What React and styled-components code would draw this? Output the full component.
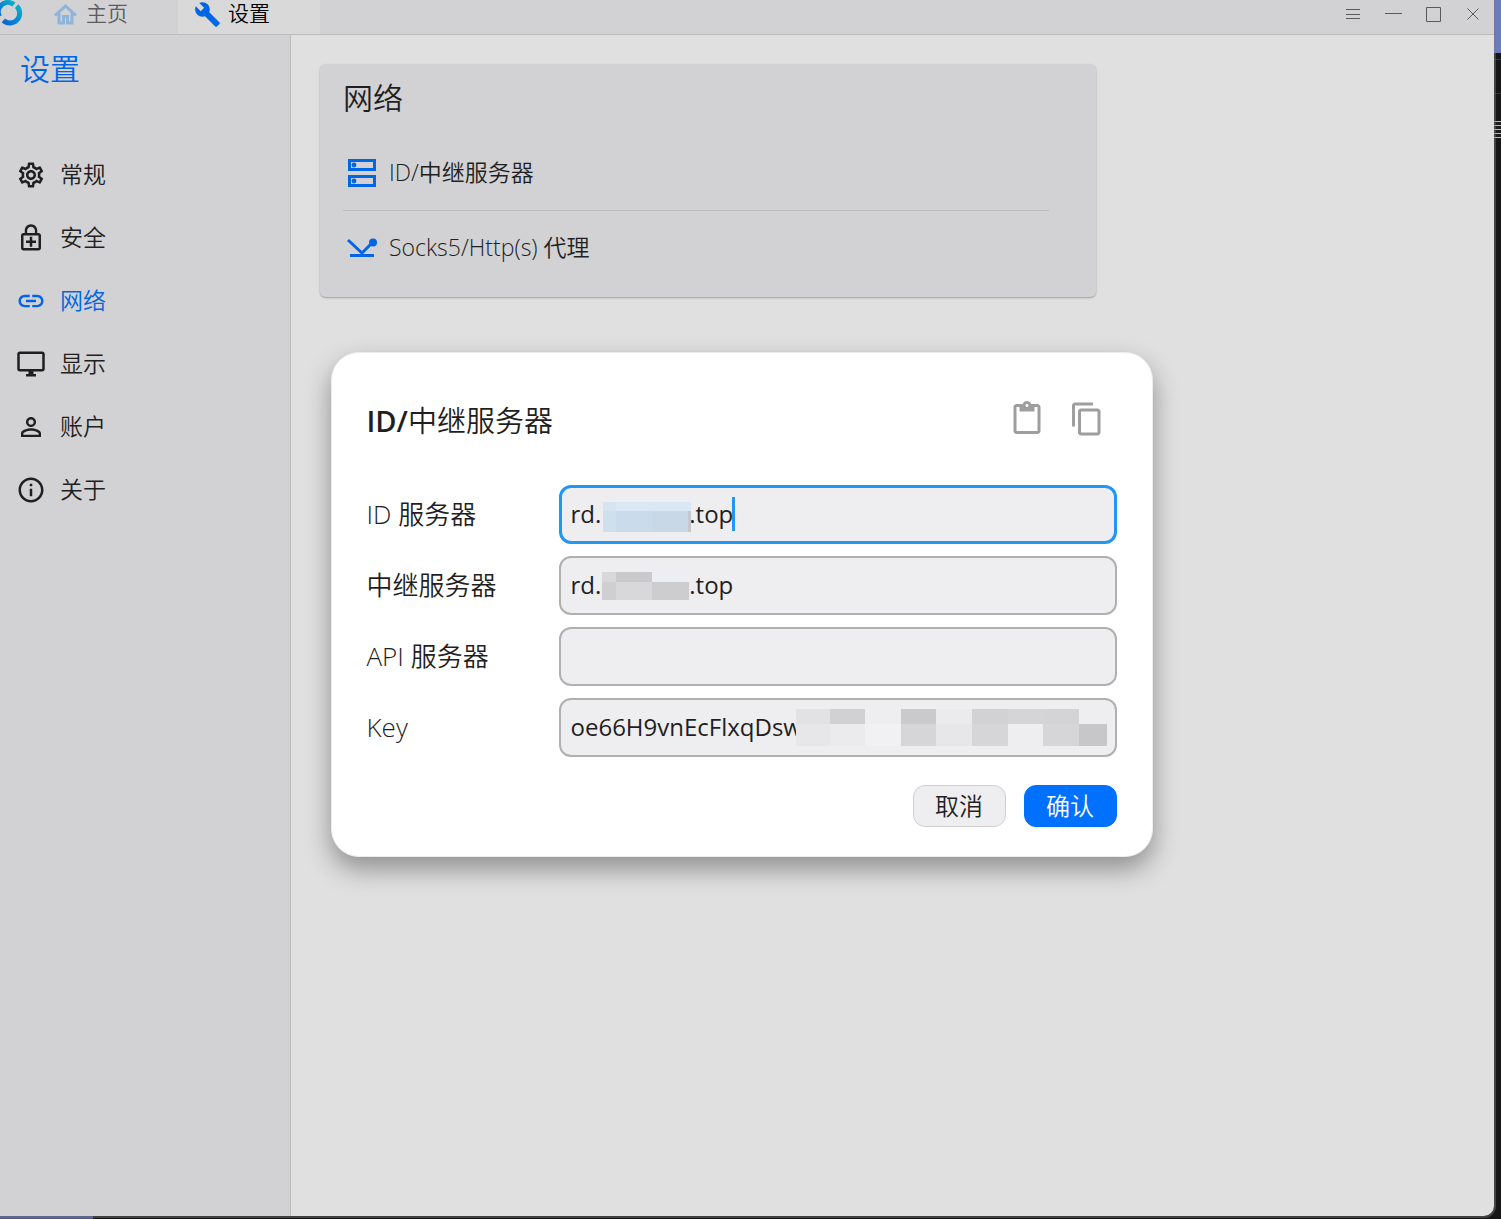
import React from "react";
import styled, { createGlobalStyle } from "styled-components";
import {
  MdBuild,
  MdOutlineSettings,
  MdOutlineEnhancedEncryption,
  MdLink,
  MdOutlineDesktopWindows,
  MdPersonOutline,
  MdInfoOutline,
  MdContentPaste,
  MdContentCopy,
} from "react-icons/md";

const c = {
  text: "#1f1f1f",
  accent: "#0066e6",
  panel: "#d2d2d4",
  body: "#e0e0e0",
  line: "#bcbcbe",
  field: "#eeeef0",
};

const GlobalStyle = createGlobalStyle`
  * { box-sizing: border-box; }
  body {
    margin: 0;
    font-family: "Open Sans", "Noto Sans CJK SC", sans-serif;
    font-weight: 350;
    color: ${c.text};
  }
  button, input { font: inherit; color: inherit; }
  h1, h2, p { margin: 0; font-weight: inherit; }
  svg { display: block; flex: none; }
`;

const Desktop = styled.div`
  min-height: 100vh;
  display: grid;
  grid-template-columns: minmax(0, 1fr) 5px;
  grid-template-rows: minmax(0, 1fr) 1px;
  background:
    linear-gradient(#6c7cba, #6c7cba) right top / 7px 53px no-repeat,
    linear-gradient(#383838, #383838) right 59px / 7px 1px no-repeat,
    linear-gradient(#383838, #383838) right 93px / 7px 1px no-repeat,
    repeating-linear-gradient(#b8b8b8 0 1px, #1c1c1c 1px 4px) right 121px / 7px 18px no-repeat,
    linear-gradient(#4f5a90, #4f5a90) left bottom / 93px 3px no-repeat,
    #161616;
`;

const Window = styled.div`
  position: relative;
  display: flex;
  flex-direction: column;
  overflow: hidden;
  border: solid rgba(120, 120, 120, 0.45);
  border-width: 0 2px 2px 0;
  border-radius: 0 0 12px 0;
`;

const TitleBar = styled.header`
  display: flex;
  height: 35px;
  background: ${c.panel};
  border-bottom: 1px solid ${c.line};
`;

const Logo = styled.div`
  width: 36px;
  height: 26px;
`;

const Name = styled.span`
  padding-bottom: 4px;
`;

const Tab = styled.button`
  display: flex;
  align-items: center;
  gap: 7px;
  width: 142px;
  height: 34px;
  padding: 0 16px 6px;
  border: 0;
  font-size: 21px;
  background: ${(p) => (p.$active ? "#d9d9da" : "transparent")};
  color: ${(p) => (p.$active ? "#000" : "#5c5c5c")};
  svg { color: ${(p) => (p.$active ? c.accent : "#8fb4dc")}; }
`;

const Controls = styled.div`
  display: flex;
  margin-left: auto;
  padding-right: 1px;
`;

const ControlButton = styled.button`
  display: grid;
  place-items: center;
  width: 40px;
  height: 28px;
  padding: 0;
  border: 0;
  background: none;
  svg { stroke: #5a5a5a; fill: none; }
`;

const Body = styled.div`
  display: flex;
  flex: 1;
`;

const Sidebar = styled.nav`
  width: 291px;
  background: ${c.panel};
  border-right: 1px solid ${c.line};
`;

const SidebarTitle = styled.h1`
  padding: 12px 20px 0;
  height: 108px;
  font-size: 30px;
  line-height: 44px;
  color: ${c.accent};
`;

const NavItem = styled.a`
  display: flex;
  align-items: center;
  gap: 14px;
  height: 63px;
  padding-left: 16px;
  font-size: 23px;
  text-decoration: none;
  color: ${(p) => (p.$active ? c.accent : c.text)};
`;

const Content = styled.main`
  flex: 1;
  padding: 29px;
  background: ${c.body};
`;

const Card = styled.section`
  max-width: 776px;
  height: 233px;
  padding: 12px 47px 0 23px;
  border-radius: 6px;
  background: ${c.panel};
  box-shadow: 0 1px 2px rgba(0, 0, 0, 0.3);
`;

const CardTitle = styled.h2`
  height: 60px;
  font-size: 30px;
  line-height: 44px;
`;

const CardRow = styled.button`
  display: flex;
  align-items: center;
  gap: 10px;
  width: 100%;
  height: 74px;
  padding: 0 0 0 2px;
  border: 0;
  background: none;
  font-size: 23px;
  text-align: left;
  svg { color: ${c.accent}; }
  & + & { border-top: 1px solid ${c.line}; }
`;

const Overlay = styled.div`
  position: absolute;
  inset: 0;
  display: grid;
  place-items: center;
  padding: 0 11px 7px 0;
`;

const Dialog = styled.form`
  width: 822px;
  max-width: 100%;
  padding: 35px 35px 29px;
  border: 1px solid #ededed;
  border-radius: 28px;
  background: #fff;
  box-shadow: 0 12px 26px rgba(0, 0, 0, 0.36);
`;

const DialogHeader = styled.div`
  display: flex;
  align-items: center;
  justify-content: space-between;
  height: 66px;
  margin-bottom: 31px;
`;

const DialogTitle = styled.h2`
  font-size: 29px;
  line-height: 40px;
  span { font-weight: 600; }
`;

const Tools = styled.div`
  display: flex;
  gap: 24px;
  padding: 0 12px 4px 0;
`;

const ToolButton = styled.button`
  padding: 0;
  border: 0;
  background: none;
  color: #9e9e9e;
`;

const Fields = styled.div`
  display: grid;
  gap: 12px;
`;

const FieldRow = styled.div`
  display: grid;
  grid-template-columns: 192px minmax(0, 1fr);
  align-items: center;
`;

const Label = styled.label`
  padding-bottom: 2px;
  font-size: 26px;
  line-height: 40px;
`;

const InputWrap = styled.div`
  position: relative;
  display: flex;
`;

const Input = styled.input`
  width: 100%;
  height: 59px;
  padding: 0 ${(p) => (p.$focused ? 9 : 10)}px 2px;
  border: ${(p) => (p.$focused ? "3px solid #2196f3" : "2px solid #b0b0b0")};
  border-radius: 12px;
  outline: none;
  background: ${c.field};
  font-size: 24px;
  font-weight: 400;
`;

const Mosaic = styled.div`
  position: absolute;
  left: ${(p) => p.$left}px;
  top: ${(p) => p.$top}px;
  display: grid;
  grid-template-columns: ${(p) => p.$cols};
  grid-template-rows: ${(p) => p.$rows};
`;

const Cell = styled.span`
  background: ${(p) => p.$color};
`;

const Caret = styled.span`
  position: absolute;
  left: 173px;
  top: 12px;
  width: 3px;
  height: 34px;
  background: #2196f3;
`;

const Actions = styled.div`
  display: flex;
  justify-content: flex-end;
  gap: 18px;
  margin-top: 28px;
`;

const ActionButton = styled.button`
  width: 93px;
  height: 42px;
  padding: 0;
  border: 1px solid ${(p) => (p.$primary ? "#0071ff" : "#d0d0d2")};
  border-radius: 12px;
  background: ${(p) => (p.$primary ? "#0071ff" : c.field)};
  color: ${(p) => (p.$primary ? "#fff" : c.text)};
  font-size: 24px;
  line-height: 38px;
`;

const nav = [
  ["常规", MdOutlineSettings],
  ["安全", MdOutlineEnhancedEncryption],
  ["网络", MdLink],
  ["显示", MdOutlineDesktopWindows],
  ["账户", MdPersonOutline],
  ["关于", MdInfoOutline],
];

const fields = [
  {
    id: "id-server",
    label: "ID 服务器",
    value: "rd.\u2003\u2003\u2003\u2002\u2009.top",
    focused: true,
    mosaic: {
      left: 44, top: 17, cols: "13px 36px 36px 3px", rows: "9px 21px",
      colors: ["#d6e4f2", "#dae8f6", "#dae8f6", "#dae8f6", "#cfdfee", "#cadcec", "#c9d8e6", "#c6c8cc"],
    },
  },
  {
    id: "relay-server",
    label: "中继服务器",
    value: "rd.\u2003\u2003\u2003\u2002\u2009.top",
    mosaic: {
      left: 43, top: 16, cols: "14px 36px 37px", rows: "10px 18px",
      colors: ["#d8d8da", "#cacacc", "#eceef3", "#cfcfd1", "#d8d8da", "#cdcdcf"],
    },
  },
  { id: "api-server", label: "API 服务器", value: "" },
  {
    id: "key",
    label: "Key",
    value: "oe66H9vnEcFlxqDsw",
    mosaic: {
      left: 237, top: 11, cols: "34px 35px 36px 35px 36px 36px 35px 36px 28px", rows: "15px 22px",
      colors: [
        "#e2e2e4", "#d1d1d3", "#eeeef0", "#cacacc", "#ebebed", "#d2d2d4", "#d5d5d7", "#d4d4d6", "#eeeef0",
        "#e7e7e9", "#ebebed", "#f1f1f3", "#d6d6d8", "#e7e7e9", "#d6d6d8", "#eeeef0", "#d6d6d8", "#c7c7c9",
      ],
    },
  },
];

function LogoMark() {
  return (
    <svg width="24" height="26" viewBox="0 0 24 26" fill="none" strokeWidth="5">
      <defs>
        <linearGradient id="ring" x1="0" y1="1" x2="1" y2="0">
          <stop offset="0" stopColor="#0a62d6" />
          <stop offset="1" stopColor="#08b0cc" />
        </linearGradient>
      </defs>
      <path d="M-0.5 16.5A9.6 9.6 0 0 1 14 4.5" stroke="url(#ring)" />
      <path d="M16.6 6.2A9.6 9.6 0 0 1 3.4 20.4" stroke="url(#ring)" />
    </svg>
  );
}

function HomeIcon() {
  return (
    <svg width="27" height="27" viewBox="0 0 27 27" fill="none" stroke="currentColor" strokeWidth="3">
      <path d="M3 14.5L13.5 5L24 14.5" />
      <path d="M7 12V22H11.5V15.5H15.5V22H20V12" />
    </svg>
  );
}

function ServerIcon() {
  return (
    <svg width="34" height="28" viewBox="0 0 34 28" fill="none" stroke="currentColor" strokeWidth="3">
      <rect x="4.5" y="1.5" width="25" height="9" />
      <rect x="4.5" y="17.5" width="25" height="9" />
      <circle cx="9" cy="6" r="2.4" fill="currentColor" stroke="none" />
      <circle cx="9" cy="22" r="2.4" fill="currentColor" stroke="none" />
    </svg>
  );
}

function ProxyIcon() {
  return (
    <svg width="34" height="20" viewBox="-2 0 34 20" fill="none" stroke="currentColor" strokeWidth="3">
      <path d="M1 2L15 15L26 4" />
      <path d="M3 17.5H27" />
      <circle cx="26" cy="4.5" r="4" fill="currentColor" stroke="none" />
    </svg>
  );
}

function Field({ id, label, value, focused, mosaic }) {
  return (
    <FieldRow>
      <Label htmlFor={id}>{label}</Label>
      <InputWrap>
        <Input id={id} defaultValue={value} $focused={focused} spellCheck={false} />
        {mosaic && (
          <Mosaic $left={mosaic.left} $top={mosaic.top} $cols={mosaic.cols} $rows={mosaic.rows}>
            {mosaic.colors.map((color, i) => (
              <Cell key={i} $color={color} />
            ))}
          </Mosaic>
        )}
        {focused && <Caret />}
      </InputWrap>
    </FieldRow>
  );
}

export default function App() {
  return (
    <>
      <GlobalStyle />
      <Desktop>
        <Window>
          <TitleBar>
            <Logo><LogoMark /></Logo>
            <Tab type="button"><HomeIcon /><Name>主页</Name></Tab>
            <Tab type="button" $active><MdBuild size={27} /><Name>设置</Name></Tab>
            <Controls>
              <ControlButton type="button" aria-label="菜单">
                <svg width="16" height="12"><path d="M1 1.5H15M1 6.5H15M1 10.5H15" /></svg>
              </ControlButton>
              <ControlButton type="button" aria-label="最小化">
                <svg width="17" height="2"><path d="M0 0.5H17" /></svg>
              </ControlButton>
              <ControlButton type="button" aria-label="最大化">
                <svg width="15" height="15"><path d="M0.5 0.5H14.5V14.5H0.5Z" /></svg>
              </ControlButton>
              <ControlButton type="button" aria-label="关闭">
                <svg width="12" height="12"><path d="M0.5 0.5L11.5 11.5M11.5 0.5L0.5 11.5" /></svg>
              </ControlButton>
            </Controls>
          </TitleBar>
          <Body>
            <Sidebar>
              <SidebarTitle>设置</SidebarTitle>
              {nav.map(([name, Icon]) => (
                <NavItem key={name} href="#" $active={name === "网络"}>
                  <Icon size={30} />
                  <Name>{name}</Name>
                </NavItem>
              ))}
            </Sidebar>
            <Content>
              <Card>
                <CardTitle>网络</CardTitle>
                <CardRow type="button"><ServerIcon /><Name>ID/中继服务器</Name></CardRow>
                <CardRow type="button"><ProxyIcon /><Name>Socks5/Http(s) 代理</Name></CardRow>
              </Card>
            </Content>
          </Body>
          <Overlay>
            <Dialog role="dialog" aria-labelledby="dialog-title" onSubmit={(e) => e.preventDefault()}>
              <DialogHeader>
                <DialogTitle id="dialog-title"><span>ID/</span>中继服务器</DialogTitle>
                <Tools>
                  <ToolButton type="button" aria-label="粘贴"><MdContentPaste size={36} /></ToolButton>
                  <ToolButton type="button" aria-label="复制"><MdContentCopy size={36} /></ToolButton>
                </Tools>
              </DialogHeader>
              <Fields>
                {fields.map((f) => (
                  <Field key={f.id} {...f} />
                ))}
              </Fields>
              <Actions>
                <ActionButton type="button">取消</ActionButton>
                <ActionButton type="submit" $primary>确认</ActionButton>
              </Actions>
            </Dialog>
          </Overlay>
        </Window>
      </Desktop>
    </>
  );
}
